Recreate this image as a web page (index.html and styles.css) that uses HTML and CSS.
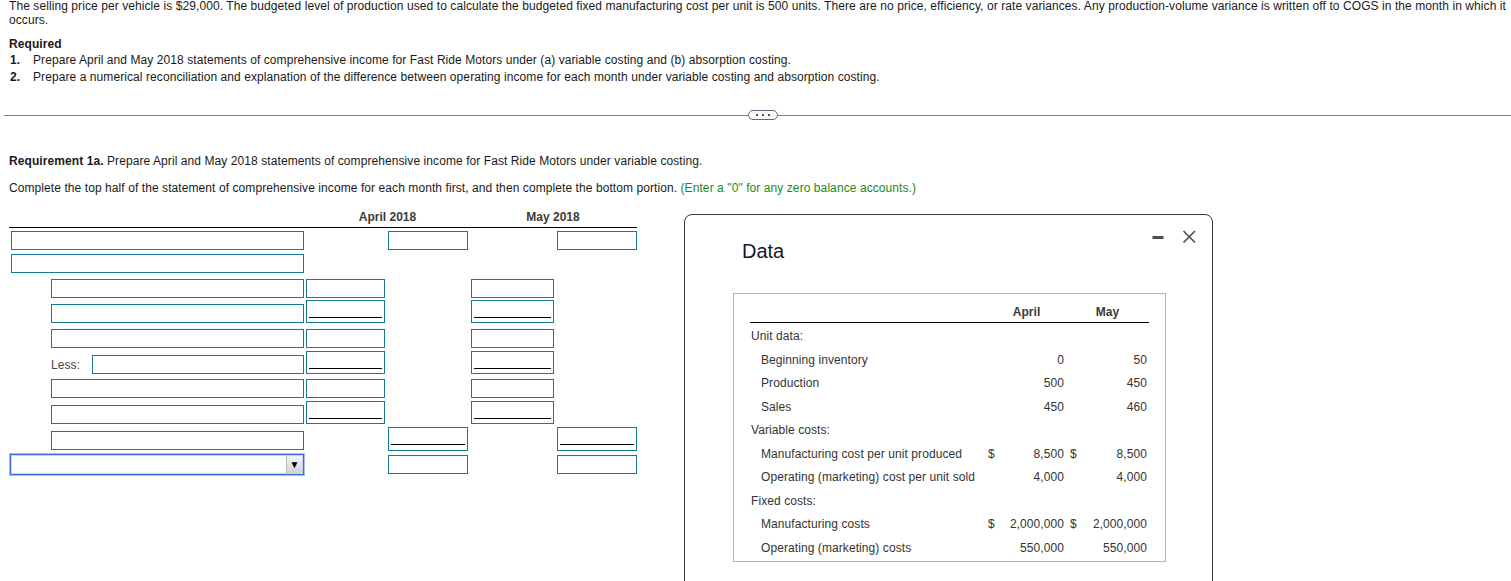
FILE: index.html
```html
<!DOCTYPE html>
<html lang="en">
<head>
<meta charset="utf-8">
<title>Requirement 1a</title>
<link rel="stylesheet" href="styles.css">
</head>
<body>
<div class="intro">
  <p class="lead">The selling price per vehicle is $29,000. The budgeted level of production used to calculate the budgeted fixed manufacturing cost per unit is 500 units. There are no price, efficiency, or rate variances. Any production-volume variance is written off to COGS in the month in which it occurs.</p>
  <p class="req-title">Required</p>
  <ol class="req-list">
    <li><span class="num">1.</span><span>Prepare April and May 2018 statements of comprehensive income for Fast Ride Motors under (a) variable costing and (b) absorption costing.</span></li>
    <li><span class="num">2.</span><span>Prepare a numerical reconciliation and explanation of the difference between operating income for each month under variable costing and absorption costing.</span></li>
  </ol>
</div>

<div class="divider">
  <span class="rule rule-left"></span>
  <span class="pill"><i></i><i></i><i></i></span>
  <span class="rule rule-right"></span>
</div>

<div class="work">
  <p class="req1a"><b>Requirement 1a.</b> Prepare April and May 2018 statements of comprehensive income for Fast Ride Motors under variable costing.</p>
  <p class="instr">Complete the top half of the statement of comprehensive income for each month first, and then complete the bottom portion. <span class="hint">(Enter a "0" for any zero balance accounts.)</span></p>

  <div class="stmt">
    <div class="stmt-head">
      <span></span>
      <span class="colhead">April 2018</span>
      <span class="colhead">May 2018</span>
    </div>

    <div class="srow h22">
      <div class="c1"><div class="box wide"></div></div>
      <div></div>
      <div><div class="box tot"></div></div>
      <div></div>
      <div><div class="box tot"></div></div>
    </div>
    <div class="srow h23">
      <div class="c1"><div class="box wide"></div></div>
    </div>
    <div class="srow h25">
      <div class="c1"><div class="box ind"></div></div>
      <div><div class="box sub"></div></div>
      <div></div>
      <div><div class="box sub2"></div></div>
    </div>
    <div class="srow h25">
      <div class="c1"><div class="box ind"></div></div>
      <div><div class="box sub ul"></div></div>
      <div></div>
      <div><div class="box sub2 ul"></div></div>
    </div>
    <div class="srow h25">
      <div class="c1"><div class="box ind"></div></div>
      <div><div class="box sub"></div></div>
      <div></div>
      <div><div class="box sub2"></div></div>
    </div>
    <div class="srow h26">
      <div class="c1 less"><span class="less-label">Less:</span><div class="box less-box"></div></div>
      <div><div class="box sub ul"></div></div>
      <div></div>
      <div><div class="box sub2 ul"></div></div>
    </div>
    <div class="srow h24">
      <div class="c1"><div class="box ind"></div></div>
      <div><div class="box sub"></div></div>
      <div></div>
      <div><div class="box sub2"></div></div>
    </div>
    <div class="srow h26">
      <div class="c1"><div class="box ind"></div></div>
      <div><div class="box sub ul"></div></div>
      <div></div>
      <div><div class="box sub2 ul"></div></div>
    </div>
    <div class="srow h27">
      <div class="c1"><div class="box ind lift"></div></div>
      <div></div>
      <div><div class="box tot ul tall"></div></div>
      <div></div>
      <div><div class="box tot ul tall"></div></div>
    </div>
    <div class="srow h24">
      <div class="c1"><div class="select"><span class="select-btn">&#9660;</span></div></div>
      <div></div>
      <div><div class="box tot lift"></div></div>
      <div></div>
      <div><div class="box tot lift"></div></div>
    </div>
  </div>
</div>

<div class="dialog">
  <div class="dialog-head">
    <h2 class="dialog-title">Data</h2>
    <div class="dialog-tools">
      <svg class="ico-min" width="12" height="14" viewBox="0 0 12 14" aria-hidden="true"><rect x="0.5" y="6" width="11" height="3" fill="#4a4f58"/></svg>
      <svg class="ico-close" width="14" height="14" viewBox="0 0 14 14" aria-hidden="true"><path d="M1.5 1 L13 12.5 M13 1 L1.5 12.5" stroke="#4c5360" stroke-width="1.7" fill="none"/></svg>
    </div>
  </div>
  <div class="data-box">
    <table class="data">
      <colgroup>
        <col class="w-label"><col class="w-d1"><col class="w-v1"><col class="w-d2"><col class="w-v2">
      </colgroup>
      <thead>
        <tr><th></th><th colspan="2">April</th><th colspan="2">May</th></tr>
      </thead>
      <tbody>
        <tr class="spacer"><td colspan="5"></td></tr>
        <tr><td class="grp">Unit data:</td><td></td><td class="v"></td><td></td><td class="v2"></td></tr>
        <tr><td class="sub">Beginning inventory</td><td></td><td class="v">0</td><td></td><td class="v2">50</td></tr>
        <tr><td class="sub">Production</td><td></td><td class="v">500</td><td></td><td class="v2">450</td></tr>
        <tr><td class="sub">Sales</td><td></td><td class="v">450</td><td></td><td class="v2">460</td></tr>
        <tr><td class="grp">Variable costs:</td><td></td><td class="v"></td><td></td><td class="v2"></td></tr>
        <tr><td class="sub">Manufacturing cost per unit produced</td><td class="d1">$</td><td class="v">8,500</td><td class="d2">$</td><td class="v2">8,500</td></tr>
        <tr><td class="sub">Operating (marketing) cost per unit sold</td><td></td><td class="v">4,000</td><td></td><td class="v2">4,000</td></tr>
        <tr><td class="grp">Fixed costs:</td><td></td><td class="v"></td><td></td><td class="v2"></td></tr>
        <tr><td class="sub">Manufacturing costs</td><td class="d1">$</td><td class="v">2,000,000</td><td class="d2">$</td><td class="v2">2,000,000</td></tr>
        <tr><td class="sub">Operating (marketing) costs</td><td></td><td class="v">550,000</td><td></td><td class="v2">550,000</td></tr>
      </tbody>
    </table>
  </div>
</div>
</body>
</html>
```

FILE: styles.css
```css
html, body {
  margin: 0;
  padding: 0;
  overflow: hidden;
  height: 581px;
  background: #fff;
}
body {
  font-family: "Liberation Sans", Arial, sans-serif;
  font-size: 12px;
  letter-spacing: 0.08px;
  color: #1a1a1a;
  position: relative;
}
p { margin: 0; }

/* intro */
.intro {
  padding-left: 9px;
}
.lead {
  margin-top: -1px;
  line-height: 14px;
}
.req-title {
  margin-top: 10px;
  line-height: 14px;
  font-weight: bold;
}
.req-list {
  list-style: none;
  margin: 1px 0 0 0;
  padding: 0;
  line-height: 17px;
}
.req-list li {
  display: flex;
}
.req-list .num {
  font-weight: bold;
  width: 23px;
  padding-left: 1px;
  flex: none;
}

/* divider */
.divider {
  display: flex;
  align-items: center;
  height: 10px;
  margin: 24px 0 0 4px;
}
.rule {
  height: 1px;
  background: #7a8592;
}
.rule-left { width: 744px; flex: none; }
.rule-right { flex: 1; }
.pill {
  flex: none;
  width: 30px;
  height: 10px;
  box-sizing: border-box;
  border: 1px solid #5f6a78;
  border-radius: 5px;
  background: #f7f8fa;
  display: flex;
  align-items: center;
  justify-content: center;
  gap: 4px;
}
.pill i {
  display: block;
  width: 2px;
  height: 2px;
  background: #4e5866;
}

/* work area */
.work {
  padding-left: 9px;
}
.req1a {
  margin-top: 34px;
  line-height: 14px;
}
.instr {
  margin-top: 13px;
  line-height: 14px;
}
.hint { color: #1b8a1b; }

.stmt {
  margin-top: 15px;
  width: 628px;
}
.stmt-head,
.srow {
  display: grid;
  grid-template-columns: 297px 82px 83px 86px 80px;
}
.stmt-head {
  height: 17px;
  border-bottom: 1px solid #000;
  box-sizing: content-box;
}
.colhead {
  grid-column: span 2;
  text-align: center;
  font-weight: bold;
  color: #3a3a3a;
  line-height: 14px;
  letter-spacing: 0;
  padding-right: 2px;
}
.srow {
  align-items: end;
}
.h22 { height: 22px; }
.h23 { height: 23px; }
.h24 { height: 24px; }
.h25 { height: 25px; }
.h26 { height: 26px; }
.h27 { height: 27px; }

.box {
  box-sizing: border-box;
  height: 19px;
  border: 1px solid #137a98;
  background: #fff;
}
.box.wide { margin-left: 2px; width: 293px; }
.box.ind { margin-left: 42px; width: 253px; }
.box.sub { width: 79px; }
.box.sub2 { width: 83px; }
.box.tot { width: 80px; }
.box.ul {
  height: 23px;
  background-image: linear-gradient(#000, #000);
  background-repeat: no-repeat;
  background-size: calc(100% - 4px) 1px;
  background-position: 2px calc(100% - 4px);
}
.box.tall { height: 24px; background-position: 2px calc(100% - 5px); }
.box.lift { margin-bottom: 1px; }

.c1.less {
  display: flex;
  align-items: center;
  padding-left: 42px;
}
.less-label {
  width: 41px;
  color: #444;
  line-height: 14px;
}
.less-box { width: 212px; }

.select {
  box-sizing: border-box;
  margin-left: 1px;
  width: 294px;
  height: 21px;
  border: 1px solid #3f6bd6;
  box-shadow: 0 0 0 1px #a9bdf0, inset 0 0 0 1px #c7d4f5;
  background: #fff;
  display: flex;
  justify-content: flex-end;
}
.select-btn {
  width: 16px;
  margin: 1px;
  box-sizing: border-box;
  background: linear-gradient(#f6f6f6, #d2d2d2);
  border-left: 1px solid #b8b8b8;
  font-size: 10px;
  line-height: 17px;
  text-align: center;
  color: #000;
  letter-spacing: 0;
}

/* dialog */
.dialog {
  position: absolute;
  left: 684px;
  top: 214px;
  width: 529px;
  height: 390px;
  box-sizing: border-box;
  border: 1px solid #3a3a3a;
  border-radius: 8px;
  background: #fff;
  padding: 15px 16px 0 48px;
}
.dialog-head {
  display: flex;
  align-items: flex-start;
  justify-content: space-between;
  height: 33px;
}
.dialog-title {
  margin: 9px 0 0 9px;
  font-size: 20px;
  font-weight: normal;
  line-height: 24px;
  letter-spacing: 0;
  color: #15152e;
}
.dialog-tools {
  display: flex;
  align-items: flex-start;
  gap: 18px;
}
.ico-min, .ico-close { display: block; }

.data-box {
  margin-top: 30px;
  width: 433px;
  box-sizing: border-box;
  border: 1px solid #b4b4b4;
  padding: 0 16px 1px 16px;
}
.data {
  border-collapse: collapse;
  table-layout: fixed;
  width: 399px;
  color: #333;
  white-space: nowrap;
}
.w-label { width: 237px; }
.w-d1 { width: 9px; }
.w-v1 { width: 70px; }
.w-d2 { width: 11px; }
.w-v2 { width: 72px; }
.data th {
  height: 28px;
  padding: 0 0 3px 0;
  line-height: 14px;
  vertical-align: bottom;
  font-weight: bold;
  text-align: center;
  border-bottom: 1px solid #000;
  color: #3a3a3a;
  box-sizing: border-box;
}
.data td {
  height: 23.5px;
  padding: 0;
  line-height: 14px;
  vertical-align: middle;
}
.data tr.spacer td { height: 2px; }
.data td.grp { padding-left: 1px; }
.data td.sub { padding-left: 11px; }
.data td.d1 { padding-left: 1px; }
.data td.d2 { padding-left: 4px; }
.data td.v, .data td.v2 { text-align: right; padding-right: 2px; }
```
